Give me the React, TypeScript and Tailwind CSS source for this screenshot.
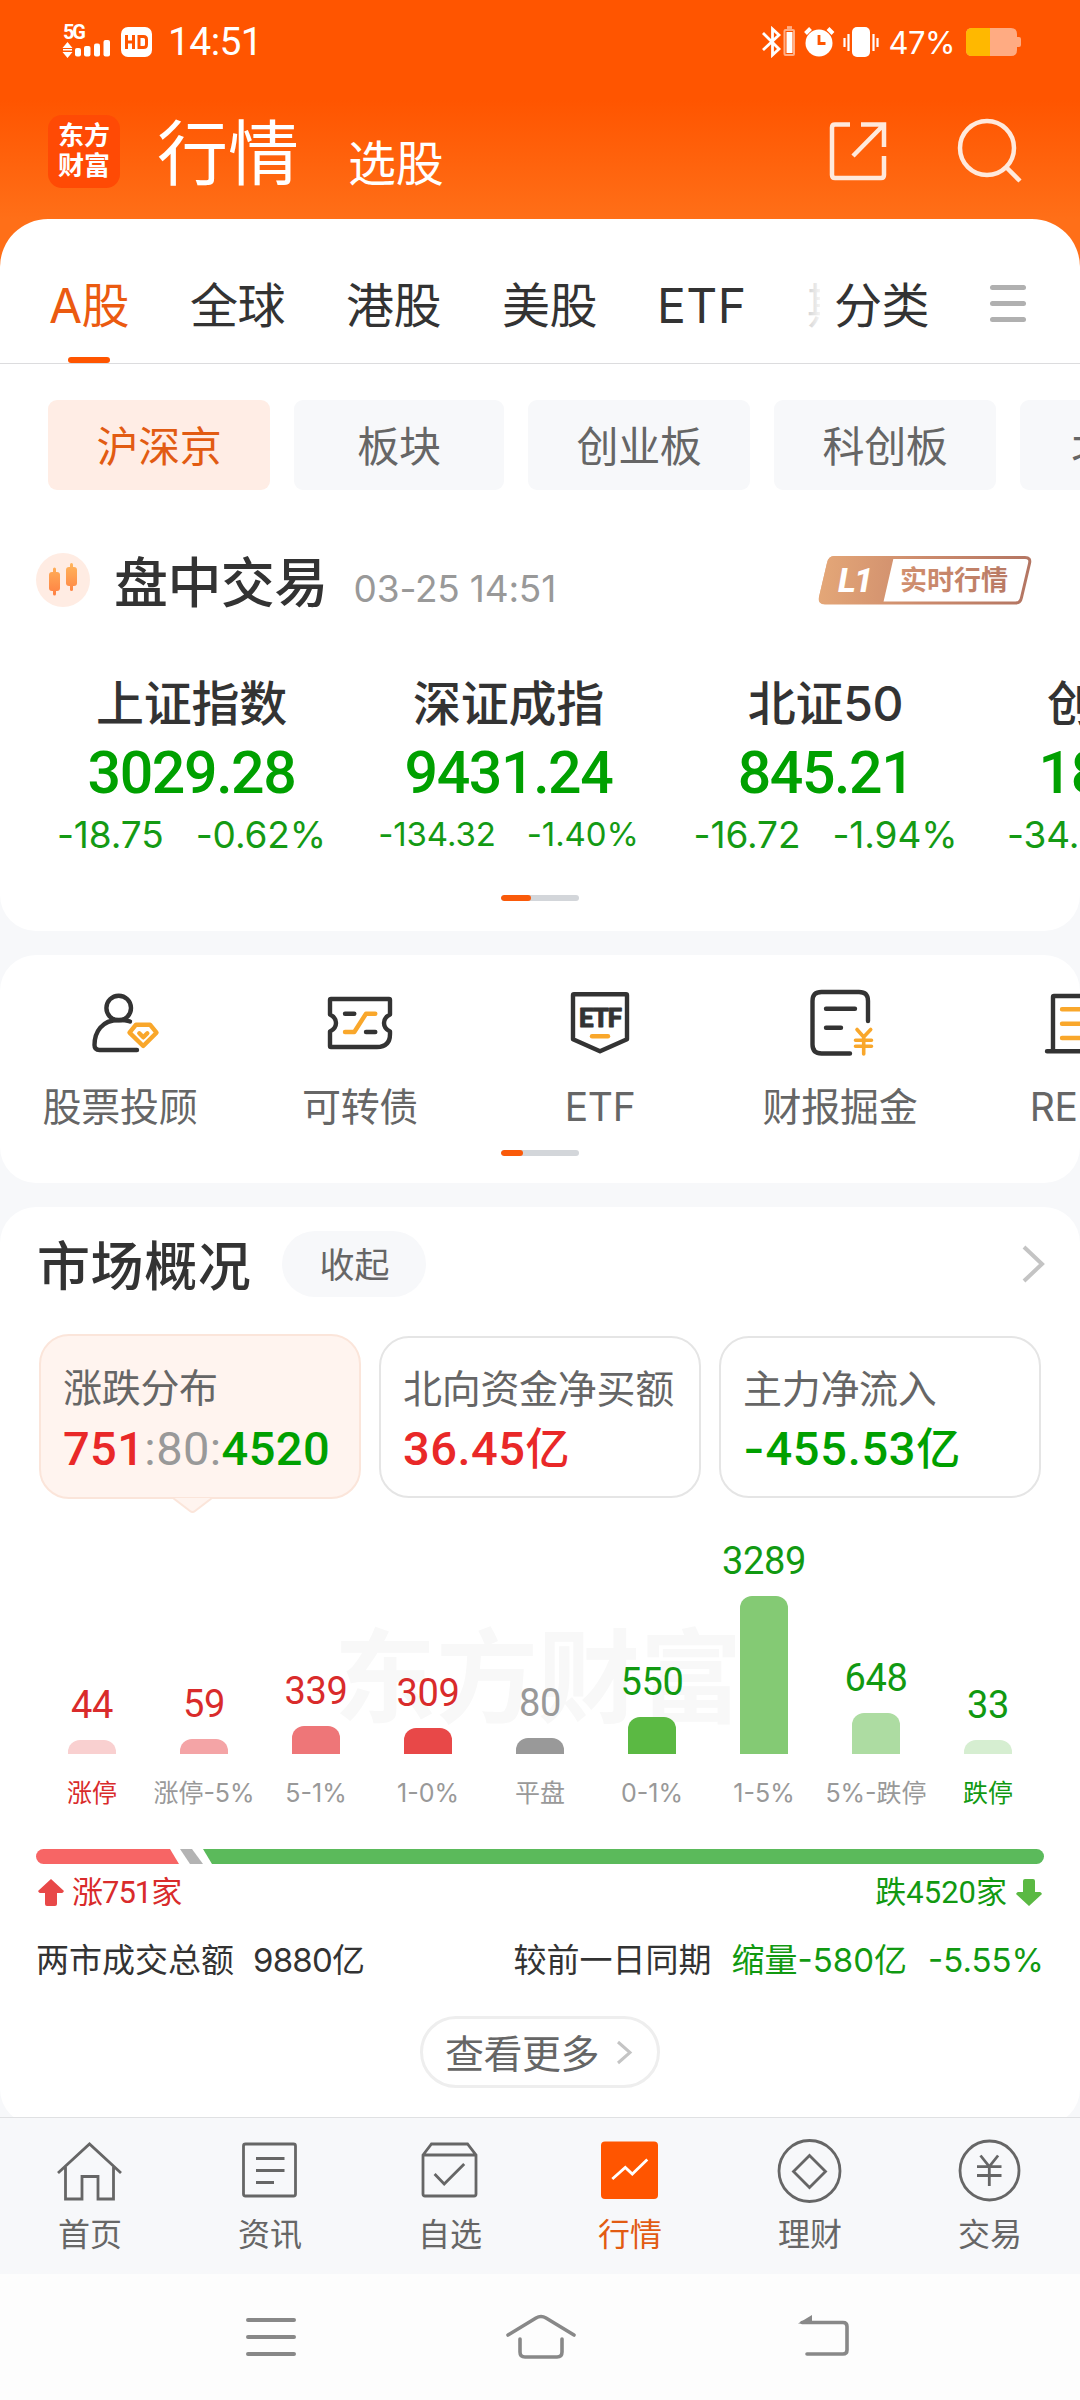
import { FC, ReactNode } from "react";

const tabs = ["全球", "港股", "美股"];

const markets = [
  { name: "沪深京", width: "w-[222px]" },
  { name: "板块", width: "w-[210px]" },
  { name: "创业板", width: "w-[222px]" },
  { name: "科创板", width: "w-[222px]" },
  { name: "北证", width: "w-[186px]" },
];

const indices = [
  { name: "上证指数", value: "3029.28", change: "-18.75", percent: "-0.62%", size: "text-[37px] gap-[32px]" },
  { name: "深证成指", value: "9431.24", change: "-134.32", percent: "-1.40%", size: "text-[33px] gap-[31px]" },
  { name: "北证50", value: "845.21", change: "-16.72", percent: "-1.94%", size: "text-[37px] gap-[32px]" },
  { name: "创业板指", value: "1833.33", change: "-34.93", percent: "-1.87%", size: "text-[37px] gap-[32px]" },
];

const distribution = [
  { label: "涨停", count: 44, height: 14, bar: "bg-[#f9d0d0]", text: "text-[#d92b2b]", labelText: "text-[#d92b2b]" },
  { label: "涨停-5%", count: 59, height: 15, bar: "bg-[#f4a4a6]", text: "text-[#d92b2b]", labelText: "text-[#999]" },
  { label: "5-1%", count: 339, height: 28, bar: "bg-[#ee7678]", text: "text-[#d92b2b]", labelText: "text-[#999]" },
  { label: "1-0%", count: 309, height: 26, bar: "bg-[#e84848]", text: "text-[#d92b2b]", labelText: "text-[#999]" },
  { label: "平盘", count: 80, height: 16, bar: "bg-[#999]", text: "text-[#999]", labelText: "text-[#999]" },
  { label: "0-1%", count: 550, height: 37, bar: "bg-[#5bb943]", text: "text-[#119911]", labelText: "text-[#999]" },
  { label: "1-5%", count: 3289, height: 158, bar: "bg-[#84ca74]", text: "text-[#119911]", labelText: "text-[#999]" },
  { label: "5%-跌停", count: 648, height: 41, bar: "bg-[#addca2]", text: "text-[#119911]", labelText: "text-[#999]" },
  { label: "跌停", count: 33, height: 14, bar: "bg-[#d6eed1]", text: "text-[#119911]", labelText: "text-[#119911]" },
];

const StatusBar: FC = () => (
  <div className="flex h-[84px] items-center justify-between pr-[59px] pl-[62px] text-white">
    <div className="flex items-center">
      <svg width="50" height="36" viewBox="0 0 50 36" fill="currentColor">
        <text x="1" y="15" fontSize="20" fontWeight="700" fontFamily="Roboto" textLength="23">
          5G
        </text>
        <path d="M5.5 18l5 6h-10zM5.5 34l5-6h-10zM1 25h9v1.5H1z" />
        <rect x="13" y="24" width="6" height="8.500" rx="2" />
        <rect x="22" y="22" width="6.500" height="10.500" rx="2" />
        <rect x="32" y="19.500" width="6" height="13" rx="2" />
        <rect x="41.500" y="16" width="6.500" height="16.500" rx="2" />
      </svg>
      <svg className="ml-[9px]" width="31" height="30" viewBox="0 0 31 30">
        <rect width="31" height="30" rx="7" fill="#fff" />
        <path d="M5.500 8v14M12.500 8v14M5.500 15h7M18 9.500h4.500q3 0 3 3v5q0 3-3 3H18z" fill="none" stroke="#ff5500" strokeWidth="3" />
      </svg>
      <span className="ml-[16px] font-['Roboto'] text-[39px] leading-none tracking-[-0.6px]">14:51</span>
    </div>
    <div className="flex items-center">
      <svg width="118" height="32" viewBox="0 0 118 32" fill="none" stroke="#fff" strokeWidth="2.800">
        <path d="M1 7l16 16-6.500 6V3L17 9 1 24" />
        <rect x="22.500" y="4" width="9.500" height="25" rx="1" stroke="#ffaf87" strokeWidth="2" />
        <path d="M25 1.500h5" stroke="#ffaf87" />
        <path d="M24.500 6h6v21h-6z" fill="#fff" stroke="none" />
        <circle cx="57" cy="17" r="13.500" fill="#fff" stroke="none" />
        <path d="M57 9v8.500h6.500" stroke="#ff5500" />
        <path d="M43.500 7.500l5-5M71 7.500l-5-5" strokeWidth="4" />
        <rect x="90" y="1" width="18" height="30" rx="5" fill="#fff" stroke="none" />
        <path d="M82.500 12v9M86.500 8v17M111.500 8v17M115.500 12v9" strokeWidth="2.200" />
      </svg>
      <span className="ml-[8px] text-[31px] leading-none tracking-[-0.5px]">47%</span>
      <svg className="ml-[11px]" width="55" height="28" viewBox="0 0 55 28">
        <path d="M6 0h39q6 0 6 6v3h2q2 0 2 2v6q0 2-2 2h-2v3q0 6-6 6H6q-6 0-6-6V6q0-6 6-6z" fill="#ffab82" />
        <path d="M6 0h18v28H6q-6 0-6-6V6q0-6 6-6z" fill="#ffb800" />
      </svg>
    </div>
  </div>
);

const Header: FC = () => (
  <header className="flex h-[135px] items-start pt-[31px] pl-[48px] text-white">
    <div className="flex h-[73px] w-[72px] flex-col items-center justify-center rounded-[14px] bg-[#ff4a05] text-[26px] leading-[30px] font-bold">
      <span className="-mt-[1px]">东方</span>
      <span>财富</span>
    </div>
    <h1 className="ml-[37px] pt-[3px] text-[71px] leading-none">行情</h1>
    <span className="ml-[49px] pt-[25px] text-[48px] leading-none tracking-[-0.3px]">选股</span>
    <svg className="mt-[5px] ml-auto" width="62" height="62" viewBox="0 0 62 62" fill="none" stroke="#ffe9dc" strokeWidth="4.500">
      <path d="M23 4.500H8q-3 0-3 3V55q0 3 3 3h46q3 0 3-3V36M34 4.500h23V27M57 4.500L26 36" />
    </svg>
    <svg className="mt-[1px] mr-[57px] ml-[68px]" width="66" height="68" viewBox="0 0 66 68" fill="none" stroke="#ffe9dc" strokeWidth="4.500">
      <circle cx="30" cy="32" r="27" />
      <path d="M49 51l14 14" />
    </svg>
  </header>
);

const Tabs: FC = () => (
  <nav className="flex h-[145px] border-b border-[#dcdcde] text-[48px] leading-none tracking-[-0.6px] text-[#333]">
    <div className="ml-[48px] flex w-[82px] flex-col items-center text-[#eb5a10]">
      <span className="pt-[63px] whitespace-nowrap">A股</span>
      <i className="mt-auto h-[6px] w-[42px] rounded-full bg-[#ff5500]" />
    </div>
    <span className="ml-[60px] w-[94px] pt-[63px] whitespace-nowrap">{tabs[0]}</span>
    {tabs.slice(1).map((tab) => (
      <span key={tab} className="ml-[62px] w-[94px] pt-[63px] whitespace-nowrap">
        {tab}
      </span>
    ))}
    <span className="ml-[61px] w-[87px] pt-[63px] tracking-[0.4px]">ETF</span>
    <span className="relative ml-[63px] w-[13px] overflow-hidden pt-[63px] text-[#ccc]">
      期
      <i className="absolute inset-0 bg-linear-to-r from-white/10 to-white/80" />
    </span>
    <span className="ml-[14px] w-[94px] pt-[63px] whitespace-nowrap">分类</span>
    <div className="ml-[62px] flex flex-col gap-[11px] pt-[66px]">
      <i className="h-[5px] w-[36px] rounded-full bg-[#b0b0b0]" />
      <i className="h-[5px] w-[36px] rounded-full bg-[#b0b0b0]" />
      <i className="h-[5px] w-[36px] rounded-full bg-[#b0b0b0]" />
    </div>
  </nav>
);

const MarketPills: FC = () => (
  <div className="mt-[36px] flex h-[90px] gap-[24px] overflow-hidden pl-[48px]">
    {markets.map(({ name, width }, i) => (
      <button
        key={name}
        className={`${width} shrink-0 rounded-[9px] pt-[3px] text-[42px] leading-none tracking-[-0.3px] ${
          i === 0 ? "bg-[#ffede5] text-[#e25b12]" : "bg-[#f7f8fa] text-[#666]"
        }`}
      >
        {name}
      </button>
    ))}
  </div>
);

const LevelBadge: FC = () => (
  <svg className="mr-[48px] ml-auto" width="214" height="50" viewBox="0 0 214 50">
    <defs>
      <linearGradient id="level" x1="0" x2="214" y1="0" y2="20" gradientUnits="userSpaceOnUse">
        <stop offset="0" stopColor="#e5a878" />
        <stop offset="0.5" stopColor="#cc8a6c" />
        <stop offset="1" stopColor="#b37562" />
      </linearGradient>
    </defs>
    <path d="M16 2.500H207q6 0 4.500 6l-8 34q-1 5.500-6 5.500H7q-6 0-4.500-6l8-34q1-5.500 5.500-5.500z" fill="#fff" stroke="url(#level)" strokeWidth="3" />
    <path d="M16 1H76L65 49H7q-7 0-6-7L9 8q2-7 7-7z" fill="url(#level)" />
    <text x="20" y="37" fill="#fff" fontFamily="Roboto" fontSize="34" fontStyle="italic" fontWeight="800" textLength="35">
      L1
    </text>
    <text x="82" y="35" fill="url(#level)" fontFamily="Noto Sans CJK SC" fontSize="27" fontWeight="700" textLength="108">
      实时行情
    </text>
  </svg>
);

const Pager: FC<{ className: string; active: string }> = ({ className, active }) => (
  <div className={`${className} mx-auto h-[6px] w-[78px] overflow-hidden rounded-full bg-[#d3d6da]`}>
    <div className={`${active} h-full rounded-full bg-[#fa5a0a]`} />
  </div>
);

const Indices: FC = () => (
  <section className="h-[567px] overflow-hidden rounded-b-[36px] bg-white">
    <MarketPills />
    <div className="mt-[62px] flex h-[56px] items-center pl-[36px]">
      <svg width="54" height="56" viewBox="0 0 54 56">
        <defs>
          <linearGradient id="candle" x1="0" x2="0" y1="10" y2="44" gradientUnits="userSpaceOnUse">
            <stop offset="0" stopColor="#ffb75c" />
            <stop offset="1" stopColor="#ff7f42" />
          </linearGradient>
        </defs>
        <circle cx="27" cy="28" r="27" fill="#ffece3" />
        <g fill="url(#candle)">
          <rect x="13" y="20" width="11" height="19" rx="3" />
          <rect x="17" y="15.500" width="3" height="28" rx="1.500" />
          <rect x="30" y="15" width="11" height="19" rx="3" />
          <rect x="34" y="11" width="3" height="28" rx="1.500" />
        </g>
      </svg>
      <h2 className="mt-[8px] ml-[24px] text-[54px] leading-none font-medium tracking-[-0.6px] text-[#333]">盘中交易</h2>
      <span className="mt-[17px] ml-[26px] text-[37px] leading-none tracking-[-0.2px] whitespace-nowrap text-[#999]">03-25 14:51</span>
      <LevelBadge />
    </div>
    <div className="mt-[70px] ml-[33px] flex leading-none">
      {indices.map(({ name, value, change, percent, size }) => (
        <div key={name} className="flex w-[317px] shrink-0 flex-col items-center">
          <span className="text-[48px] leading-[52px] font-medium tracking-[-0.3px] text-[#333]">{name}</span>
          <span className="mt-[13px] font-['Roboto'] text-[59px] leading-[60px] font-medium tracking-[-1.4px] text-[#00a000]">{value}</span>
          <div className={`${size} mt-[7px] flex h-[48px] items-center tracking-[-0.1px] whitespace-nowrap text-[#149a14]`}>
            <span>{change}</span>
            <span>{percent}</span>
          </div>
        </div>
      ))}
    </div>
    <Pager className="mt-[37px]" active="w-[30px]" />
  </section>
);

const Shortcut: FC<{ label: string; children: ReactNode }> = ({ label, children }) => (
  <div className="flex w-[240px] shrink-0 flex-col items-center">
    <svg width="80" height="80" viewBox="0 0 80 80" fill="none" stroke="#333" strokeWidth="4.400" strokeLinecap="round" strokeLinejoin="round">
      {children}
    </svg>
    <span className="mt-[27px] text-[39px] leading-none tracking-[-0.3px] whitespace-nowrap text-[#666]">{label}</span>
  </div>
);

const Shortcuts: FC = () => (
  <section className="mt-[24px] h-[228px] overflow-hidden rounded-[36px] bg-white pt-[25px]">
    <div className="flex">
      <Shortcut label="股票投顾">
        <circle cx="38.700" cy="28" r="12.300" />
        <path d="M50 41.500C46 40 42 40 38.500 40 22 40 14.500 52 14.500 65q0 5 5 5H57" />
        <path d="M56 44.700h14l6.500 8L63.200 66 49.500 52.700zM59.300 53.300l4 4 4-4" stroke="#f9a72b" />
      </Shortcut>
      <Shortcut label="可转债">
        <path d="M11 19h58q1 0 1 1v14.500c-8 4-8 13 0 17V54q0 13-13 13H11q-1 0-1-1V51.500c8-4 8-13 0-17V20q0-1 1-1zM25 33.700h9.300M46 52h9.300" />
        <path d="M25 52h9.300L46 33.700h9.300" stroke="#f9a72b" />
      </Shortcut>
      <Shortcut label="ETF">
        <path d="M14 14.300h52q1 0 1 1v44L40 71.300l-27-12v-44q0-1 1-1z" />
        <text x="19" y="46.500" fill="#333" stroke="#333" strokeWidth="0.800" fontFamily="Roboto" fontWeight="800" fontSize="26" textLength="43">
          ETF
        </text>
        <path d="M32 56.300h16" stroke="#f9a72b" />
      </Shortcut>
      <Shortcut label="财报掘金">
        <path d="M68 41V21q0-9-9-9H21.500q-9 0-9 9v43.500q0 9 9 9H50M26 28.700h29M26 47.700h15" />
        <path d="M57 49.500l6.700 7.500 7-7.500M63.700 57v17M55.500 60.300h16M55.500 66.300h16" stroke="#f9a72b" strokeWidth="3.600" />
      </Shortcut>
      <Shortcut label="REITs">
        <path d="M7 71.300h66M13 71V17q0-1 1-1h52q1 0 1 1v54" />
        <path d="M22 29.300h36M22 43.700h36M22 58h36" stroke="#f9a72b" />
      </Shortcut>
    </div>
    <Pager className="mt-[24px]" active="w-[22px]" />
  </section>
);

const Chevron: FC<{ className: string; width: number; height: number; stroke: number }> = ({ className, width, height, stroke }) => (
  <svg className={className} width={width} height={height} viewBox={`0 0 ${width} ${height}`} fill="none" stroke="#c4c4c4" strokeWidth={stroke}>
    <path d={`M2 2L${width - 3} ${height / 2}L2 ${height - 2}`} />
  </svg>
);

const SummaryCards: FC = () => (
  <div className="mt-[37px] flex h-[165px] items-center gap-[18px] pl-[39px] leading-none whitespace-nowrap text-[#666]">
    <div className="relative h-[165px] w-[322px] rounded-[30px] border-2 border-[#fbe5da] bg-[#fff4ef] pt-[32px] pl-[22px]">
      <div className="text-[39px] leading-[40px] tracking-[-0.3px]">涨跌分布</div>
      <div className="mt-[14px] font-['Roboto'] text-[47px] leading-[54px] font-medium tracking-[0.4px]">
        <span className="text-[#e92828]">751</span>
        <span className="font-normal text-[#999]">:80:</span>
        <span className="text-[#00a000]">4520</span>
      </div>
      <svg className="absolute top-[160px] left-[131px]" width="42" height="18" viewBox="0 0 42 18">
        <path d="M1 2l17 13q2.500 2 5 0L40 2z" fill="#fff4ef" />
        <path d="M1 2l17 13q2.500 2 5 0L40 2" fill="none" stroke="#fbe5da" strokeWidth="2" />
      </svg>
    </div>
    <div className="h-[162px] w-[322px] rounded-[30px] border-2 border-[#e5e5e5] pt-[31px] pl-[22px]">
      <div className="text-[39px] leading-[40px] tracking-[-0.3px]">北向资金净买额</div>
      <div className="mt-[13px] font-['Roboto','Noto_Sans_CJK_SC',sans-serif] text-[47px] leading-[54px] font-medium tracking-[0.5px] text-[#e92828]">
        36.45<span className="text-[44px]">亿</span>
      </div>
    </div>
    <div className="h-[162px] w-[322px] rounded-[30px] border-2 border-[#e5e5e5] pt-[31px] pl-[22px]">
      <div className="text-[39px] leading-[40px] tracking-[-0.3px]">主力净流入</div>
      <div className="mt-[13px] font-['Roboto','Noto_Sans_CJK_SC',sans-serif] text-[47px] leading-[54px] font-medium tracking-[0.7px] text-[#00a000]">
        <span className="font-['Inter'] leading-none">-</span>455.53<span className="text-[44px]">亿</span>
      </div>
    </div>
  </div>
);

const DistributionChart: FC = () => (
  <div className="relative mt-[35px] h-[280px]">
    <div className="absolute top-[93px] left-[334px] text-[102px] leading-none font-bold text-[#f8f8f8]">东方财富</div>
    <div className="relative flex px-[36px]">
      {distribution.map(({ label, count, height, bar, text, labelText }) => (
        <div key={label} className="flex w-[112px] flex-col items-center leading-none whitespace-nowrap">
          <div className="flex h-[220px] flex-col items-center justify-end">
            <span className={`${text} font-['Roboto'] text-[38px] tracking-[-0.3px]`}>{count}</span>
            <div className={`${bar} mt-[16px] w-[48px] rounded-t-[12px]`} style={{ height }} />
          </div>
          <span className={`${labelText} mt-[27px] text-[25px]`}>{label}</span>
        </div>
      ))}
    </div>
  </div>
);

const Breadth: FC = () => (
  <div className="mt-[35px] px-[36px] leading-none whitespace-nowrap">
    <svg width="1008" height="15" viewBox="0 0 1008 15">
      <path d="M7.500 0H134l9 15H7.500a7.500 7.500 0 010-15z" fill="#f76565" />
      <path d="M144 0h12l11 15h-13z" fill="#b3b3b3" />
      <path d="M167 0h833.500a7.500 7.500 0 010 15H176z" fill="#5bba5b" />
    </svg>
    <div className="mt-[11px] flex h-[34px] items-center font-['Roboto','Noto_Sans_CJK_SC',sans-serif] text-[31px] text-[#d92b2b]">
      <svg className="ml-[2px]" width="26" height="27" viewBox="0 0 26 27" fill="#e84848">
        <path d="M13 0l13 12q-1 2-2 2h-5v11q0 2-2 2H9q-2 0-2-2V14H2q-1 0-2-2z" />
      </svg>
      <span className="ml-[8px] tracking-[-1px]">涨751家</span>
      <span className="ml-auto text-[#119911]">跌4520家</span>
      <svg className="mr-[2px] ml-[9px]" width="26" height="27" viewBox="0 0 26 27" fill="#5bb943">
        <path d="M13 27l13-12q-1-2-2-2h-5V2q0-2-2-2H9Q7 0 7 2v11H2q-1 0-2 2z" />
      </svg>
    </div>
    <div className="mt-[31px] flex h-[40px] items-center text-[33px] text-[#333]">
      <span>两市成交总额</span>
      <span className="ml-[19px] tracking-[-0.8px]">9880亿</span>
      <span className="ml-auto">较前一日同期</span>
      <span className="ml-[20px] text-[#119911]">缩量-580亿</span>
      <span className="ml-[21px] text-[#119911]">-5.55%</span>
    </div>
  </div>
);

const MarketOverview: FC = () => (
  <section className="mt-[24px] h-[918px] rounded-[36px] bg-white pt-[24px]">
    <div className="flex h-[66px] items-center pl-[37px] leading-none">
      <h2 className="mt-[6px] text-[53px] font-medium tracking-[0.6px] text-[#333]">市场概况</h2>
      <button className="ml-[31px] h-[66px] w-[144px] rounded-full bg-[#f7f8fa] pt-[3px] text-[35px] text-[#666]">收起</button>
      <Chevron className="mr-[35px] ml-auto" width={23} height={38} stroke={4} />
    </div>
    <SummaryCards />
    <DistributionChart />
    <Breadth />
    <button className="mx-auto mt-[36px] flex h-[72px] w-[240px] items-center rounded-full border-3 border-[#eee] pl-[22px] text-[39px] leading-none tracking-[-0.5px] whitespace-nowrap text-[#666]">
      <span className="pt-[2px]">查看更多</span>
      <Chevron className="ml-[17px]" width={17} height={25} stroke={3} />
    </button>
  </section>
);

const NavItem: FC<{ label: string; active?: boolean; children: ReactNode }> = ({ label, active, children }) => (
  <div className={`flex w-[180px] flex-col items-center ${active ? "text-[#e25b12]" : "text-[#666]"}`}>
    <svg width="72" height="72" viewBox="0 0 72 72" fill="none" stroke="#666" strokeWidth="2.800">
      {children}
    </svg>
    <span className="mt-[13px] text-[32px] leading-none">{label}</span>
  </div>
);

const BottomNav: FC = () => (
  <nav className="relative -mt-[8px] flex h-[157px] border-t border-[#e0e1e3] bg-[#f7f8fa] pt-[16px]">
    <NavItem label="首页">
      <path d="M4 39L35.500 10 67 39M11.500 33v32H28V42.500h16V65h15.500V33" />
    </NavItem>
    <NavItem label="资讯">
      <rect x="9.500" y="10" width="52" height="52" rx="2" />
      <path d="M22 24.500h28.500M22 36.500h28.500M22 48.500h18" />
    </NavItem>
    <NavItem label="自选">
      <path d="M9 21l8.500-11h36L62 21v39q0 2-2 2H11q-2 0-2-2zM9 21h53M20.600 40l9.600 10 20-20" />
    </NavItem>
    <NavItem label="行情" active>
      <rect x="7" y="7.500" width="57" height="57.500" rx="4" fill="#ff5500" stroke="none" />
      <path d="M18.300 45l13-11.500 7 6.500 15-14.500" stroke="#fff" />
    </NavItem>
    <NavItem label="理财">
      <circle cx="35.500" cy="37" r="30.500" />
      <path d="M35.500 21.500l16 16-16 16-16-16z" />
    </NavItem>
    <NavItem label="交易">
      <circle cx="35.500" cy="36.500" r="29.500" />
      <path d="M26.500 21.500l8.800 11 8.800-11M35.300 32.500V52M23 32.700h24.500M23 41.500h24.500" />
    </NavItem>
  </nav>
);

const SystemNav: FC = () => (
  <div className="flex h-[126px] items-start bg-[#fdfdfd] pt-[36px] pr-[230px] pl-[245px]">
    <svg width="52" height="52" viewBox="0 0 52 52" stroke="#888" strokeWidth="4" strokeLinecap="round">
      <path d="M3 10h46M3 27h46M3 44h46" />
    </svg>
    <svg className="ml-[208px]" width="72" height="52" viewBox="0 0 72 52" fill="none" stroke="#888" strokeWidth="3.600" strokeLinecap="round">
      <path d="M3 25L31 8q5-3 10 0l28 17M15 29v13q0 5 5 5h32q5 0 5-5V29" />
    </svg>
    <svg className="ml-auto" width="52" height="52" viewBox="0 0 52 52" fill="none" stroke="#888" strokeWidth="3.600" strokeLinecap="round">
      <path d="M4 12.500h41q4 0 4 4V40q0 4-4 4H9" />
      <path d="M0 13.500L14 5v9z" fill="#888" stroke="none" />
    </svg>
  </div>
);

export default function App() {
  return (
    <div className="h-[2400px] w-[1080px] overflow-hidden bg-[#f7f8fa] font-['Inter','Noto_Sans_CJK_SC',sans-serif]">
      <div className="bg-[linear-gradient(#ff5500_100px,#ff6f18_219px,#ff6f18)]">
        <StatusBar />
        <Header />
        <div className="rounded-t-[48px] bg-white">
          <Tabs />
        </div>
      </div>
      <Indices />
      <Shortcuts />
      <MarketOverview />
      <BottomNav />
      <SystemNav />
    </div>
  );
}
